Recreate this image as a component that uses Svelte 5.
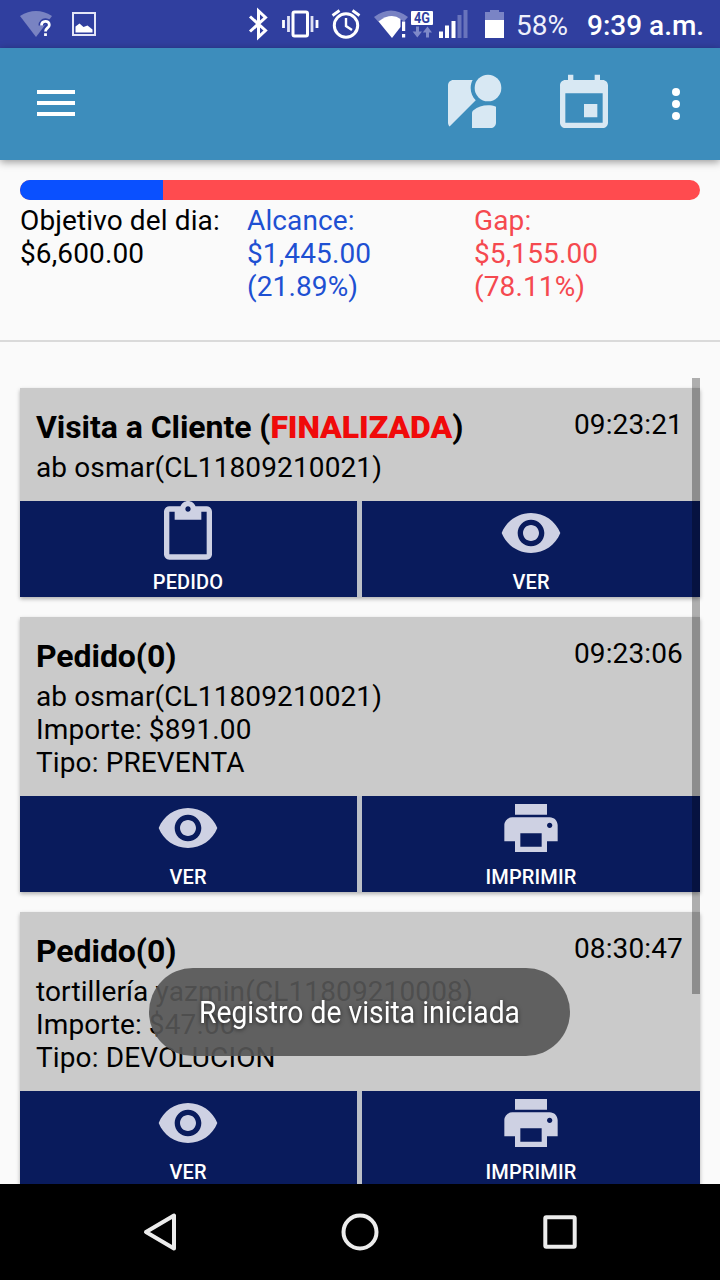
<script>
  const reached = 21.05;
  const icons = {
    paste: 'M19 2h-4.18C14.4.84 13.3 0 12 0c-1.3 0-2.4.84-2.82 2H5c-1.1 0-2 .9-2 2v16c0 1.1.9 2 2 2h14c1.1 0 2-.9 2-2V4c0-1.1-.9-2-2-2zm-7 0c.55 0 1 .45 1 1s-.45 1-1 1-1-.45-1-1 .45-1 1-1zm7 18H5V4h2v3h10V4h2v16z',
    eye: 'M12 4.5C7 4.5 2.73 7.61 1 12c1.73 4.39 6 7.5 11 7.5s9.27-3.11 11-7.5c-1.73-4.39-6-7.5-11-7.5zM12 17c-2.76 0-5-2.24-5-5s2.24-5 5-5 5 2.24 5 5-2.24 5-5 5zm0-8c-1.66 0-3 1.34-3 3s1.34 3 3 3 3-1.34 3-3-1.34-3-3-3z',
    print: 'M19 8H5c-1.66 0-3 1.34-3 3v6h4v4h12v-4h4v-6c0-1.66-1.34-3-3-3zm-3 11H8v-5h8v5zm3-7c-.55 0-1-.45-1-1s.45-1 1-1 1 .45 1 1-.45 1-1 1zm-1-9H6v4h12V3z'
  };
  const goals = [
    { tone: 'plain', lines: ['Objetivo del dia:', '$6,600.00'] },
    { tone: 'blue', lines: ['Alcance:', '$1,445.00', '(21.89%)'] },
    { tone: 'red', lines: ['Gap:', '$5,155.00', '(78.11%)'] }
  ];
  const cards = [
    {
      title: 'Visita a Cliente', status: 'FINALIZADA', time: '09:23:21',
      lines: ['ab osmar(CL11809210021)'],
      actions: [['paste', 'PEDIDO'], ['eye', 'VER']]
    },
    {
      title: 'Pedido(0)', time: '09:23:06',
      lines: ['ab osmar(CL11809210021)', 'Importe: $891.00', 'Tipo: PREVENTA'],
      actions: [['eye', 'VER'], ['print', 'IMPRIMIR']]
    },
    {
      title: 'Pedido(0)', time: '08:30:47',
      lines: ['tortillería yazmin(CL11809210008)', 'Importe: $47.00', 'Tipo: DEVOLUCION'],
      actions: [['eye', 'VER'], ['print', 'IMPRIMIR']]
    }
  ];
</script>

<div class="screen">
  <div class="status">
    <svg class="notif" width="100" height="48" viewBox="0 0 100 48">
      <path d="M20 16Q36 6 52 16L36 37Z" fill="#7983c2" />
      <path d="M41.5 25.5c0-5.5 7.8-5.5 7.8-.6 0 3.1-3.8 3-3.8 6.6M45.5 33.5v2.6" fill="none" stroke="#303f9f" stroke-width="6" />
      <path d="M41.5 25.5c0-5.5 7.8-5.5 7.8-.6 0 3.1-3.8 3-3.8 6.6M45.5 33.2v2.8" fill="none" stroke="#fff" stroke-width="2.8" />
      <rect x="73" y="13" width="22" height="22" fill="none" stroke="#e4e6f7" stroke-width="2" />
      <path d="M75.500 32.500v-6l4-3 4 3.500 4-1.500 5 4v3Z" fill="#fff" />
    </svg>
    <svg class="sys" width="260" height="48" viewBox="248 0 260 48">
      <g fill="none" stroke="#fff">
        <path d="M250 16.500l15.500 14-7 6.500V11l7 6.500-15.500 14" stroke-width="3" />
        <rect x="293" y="12" width="14.500" height="24" rx="1.500" stroke-width="3" />
        <path d="M288.500 16v16M312 16v16" stroke-width="2.800" stroke="#dfe2f5" />
        <path d="M283.500 20v8M317 20v8" stroke-width="2.800" />
        <circle cx="346" cy="25.500" r="11.700" stroke-width="3" />
        <path d="M346 18v8l6 4" stroke-width="2.400" />
        <path d="M332.500 15.500l7-5M359.500 15.500l-7-5" stroke-width="2.800" />
      </g>
      <path d="M374 17Q391 4 408 17L404 21.500Q391 13 378.500 22Z" fill="#7882c3" />
      <path d="M378.500 21.500Q391 12 400.500 19V27L392 38Z" fill="#fff" />
      <path d="M402 21.500h3.200v9.500H402zM402 34h3.200v3.500H402z" fill="#fff" />
      <rect x="411" y="11" width="22" height="14" rx="1" fill="#fff" />
      <text x="414" y="23" font-size="14" font-weight="700" textLength="16" lengthAdjust="spacingAndGlyphs" fill="#303f9f">4G</text>
      <path d="M416 26.500h3v5h3l-4.700 6-4.700-6h3.400zM426 37.500h3v-5h3l-4.500-6-4.700 6h3.200z" fill="#7f89c9" />
      <path d="M439 31.500h4V38h-4zM445 25.500h4V38h-4zM451.500 21h4V38h-4z" fill="#fff" />
      <path d="M457.500 15h4V38h-4zM463.500 10h4V38h-4z" fill="#6974bc" />
      <path d="M485 20v-8h5V10h9v2h5v8z" fill="#7a84c5" />
      <path d="M485 20h19v18h-19z" fill="#fff" />
    </svg>
    <span class="pct">58%</span>
    <span class="clock">9:39 a.m.</span>
  </div>

  <header class="toolbar">
    <div class="burger"><i></i><i></i><i></i></div>
    <svg class="street" width="64" height="64" viewBox="0 0 24 24">
      <path d="M12.56 14.33c-.34.27-.56.7-.56 1.17V21h7c1.100 0 2-.9 2-2v-5.980c-.94-.33-1.950-.52-3-.52-2.030 0-3.930.7-5.440 1.830z" />
      <circle cx="18" cy="6" r="5" />
      <path d="M11.500 6c0-1.080.27-2.100.74-3H5c-1.100 0-2 .9-2 2v14c0 .55.23 1.050.59 1.410l9.820-9.820C12.230 9.420 11.500 7.800 11.500 6z" />
    </svg>
    <svg class="event" width="64" height="64" viewBox="0 0 24 24">
      <path d="M17 12h-5v5h5v-5zM16 1v2H8V1H6v2H5c-1.110 0-1.990.9-1.990 2L3 19c0 1.100.89 2 2 2h14c1.100 0 2-.9 2-2V5c0-1.100-.9-2-2-2h-1V1h-2zm3 18H5V8h14v11z" />
    </svg>
    <div class="more"><i></i><i></i><i></i></div>
  </header>

  <section class="goal">
    <div class="bar"><div class="fill" style="width: {reached}%"></div></div>
    <div class="cols">
      {#each goals as g}
        <div class={g.tone}>
          {#each g.lines as l}<div>{l}</div>{/each}
        </div>
      {/each}
    </div>
  </section>

  <main class="list">
    {#each cards as c}
      <article class="card">
        <div class="info">
          <div class="head">
            <h2>{c.title}{#if c.status}{' ('}<b>{c.status}</b>{')'}{/if}</h2>
            <time>{c.time}</time>
          </div>
          {#each c.lines as l}<div class="line">{l}</div>{/each}
        </div>
        <div class="actions">
          {#each c.actions as [icon, label]}
            <button>
              <svg width="64" height="64" viewBox="0 0 24 24"><path d={icons[icon]} /></svg>
              <span>{label}</span>
            </button>
          {/each}
        </div>
      </article>
    {/each}
    <div class="scroll"></div>
  </main>

  <nav class="nav">
    <svg width="40" height="40" viewBox="0 0 40 40"><path d="M34 3.500v33L6 20Z" /></svg>
    <svg width="40" height="40" viewBox="0 0 40 40"><circle cx="20" cy="20" r="16.500" /></svg>
    <svg width="40" height="40" viewBox="0 0 40 40"><rect x="5.300" y="5.300" width="29.400" height="29.400" rx="1" /></svg>
  </nav>

  <div class="toast">
    <svg width="322" height="48" viewBox="0 0 322 48"><text x="0" y="35" font-size="31" textLength="321" lengthAdjust="spacingAndGlyphs">Registro de visita iniciada</text></svg>
  </div>
</div>

<style>
  :global(body) { margin: 0; background: #fafafa; }
  .screen {
    position: relative;
    width: 720px;
    height: 1280px;
    overflow: hidden;
    display: flex;
    flex-direction: column;
    background: #fafafa;
    color: #000;
    font: 28px/33px Roboto, sans-serif;
    letter-spacing: 0.12px;
  }
  svg { display: block; flex: none; letter-spacing: 0; }
  .status {
    height: 48px;
    flex: none;
    display: flex;
    align-items: center;
    background: #303f9f;
    color: #fff;
    white-space: nowrap;
  }
  .sys { margin-left: 148px; }
  .pct { margin-left: 8px; width: 71px; padding-top: 3px; letter-spacing: 0; color: #eef0fb; }
  .clock { font-weight: 500; padding-top: 3px; letter-spacing: 0; }
  .toolbar {
    height: 112px;
    flex: none;
    display: flex;
    align-items: center;
    background: #3d8dbc;
    box-shadow: 0 2px 8px rgba(0, 0, 0, 0.4);
    fill: #d8e8f3;
  }
  .burger {
    width: 38px;
    margin-left: 37px;
    display: flex;
    flex-direction: column;
    gap: 7px;
    padding-bottom: 2px;
  }
  .burger i { height: 4px; background: #fff; }
  .street { margin-left: 365px; }
  .event { margin-left: 48px; }
  .more { margin-left: 56px; display: flex; flex-direction: column; gap: 4px; }
  .more i { width: 8px; height: 8px; border-radius: 50%; background: #fff; }
  .goal {
    height: 160px;
    flex: none;
    padding: 20px 20px 0;
    border-bottom: 2px solid #dadada;
  }
  .bar { height: 20px; border-radius: 10px; background: #ff4b4f; overflow: hidden; }
  .fill { height: 100%; background: #0a50ff; }
  .cols { display: grid; grid-template-columns: 227px 227px 1fr; padding-top: 4px; }
  .blue { color: #1e50d2; }
  .red { color: #f5494f; }
  .list {
    position: relative;
    flex: 1;
    min-height: 0;
    overflow: hidden;
    display: flex;
    flex-direction: column;
    gap: 20px;
    padding: 46px 20px 0;
  }
  .card { flex: none; background: #cacaca; box-shadow: 0 2px 4px rgba(0, 0, 0, 0.3); }
  .info { padding: 20px 16px 17px; }
  .head { display: flex; justify-content: space-between; height: 43px; }
  time { width: 110px; white-space: nowrap; }
  h2 { margin: 0; font-size: 32px; line-height: 38px; font-weight: 700; white-space: pre; letter-spacing: -0.07px; }
  h2 b { color: #f00a0a; }
  .actions { display: grid; grid-template-columns: 337px 338px; gap: 5px; background: #bcc0c8; }
  button {
    height: 96px;
    border: 0;
    padding: 0;
    display: flex;
    flex-direction: column;
    align-items: center;
    background: #091b5c;
    color: #fff;
    fill: #ced1e3;
    font: 500 20px/24px Roboto, sans-serif;
    letter-spacing: 0.15px;
  }
  button:first-child { padding-right: 1px; }
  button span { padding-top: 5px; }
  .scroll {
    position: absolute;
    right: 20px;
    top: 36px;
    width: 8px;
    height: 616px;
    background: rgba(0, 0, 0, 0.3);
  }
  .nav {
    height: 96px;
    flex: none;
    display: flex;
    align-items: center;
    justify-content: center;
    gap: 160px;
    background: #000;
  }
  .nav svg { fill: none; stroke: #ececec; stroke-width: 4; stroke-linejoin: round; }
  .toast {
    position: absolute;
    left: 149px;
    top: 968px;
    width: 421px;
    height: 88px;
    border-radius: 44px;
    display: flex;
    align-items: center;
    justify-content: center;
    background: rgba(86, 86, 86, 0.91);
  }
  .toast svg { fill: #fff; filter: drop-shadow(0 1px 2px rgba(0, 0, 0, 0.6)); }
</style>
